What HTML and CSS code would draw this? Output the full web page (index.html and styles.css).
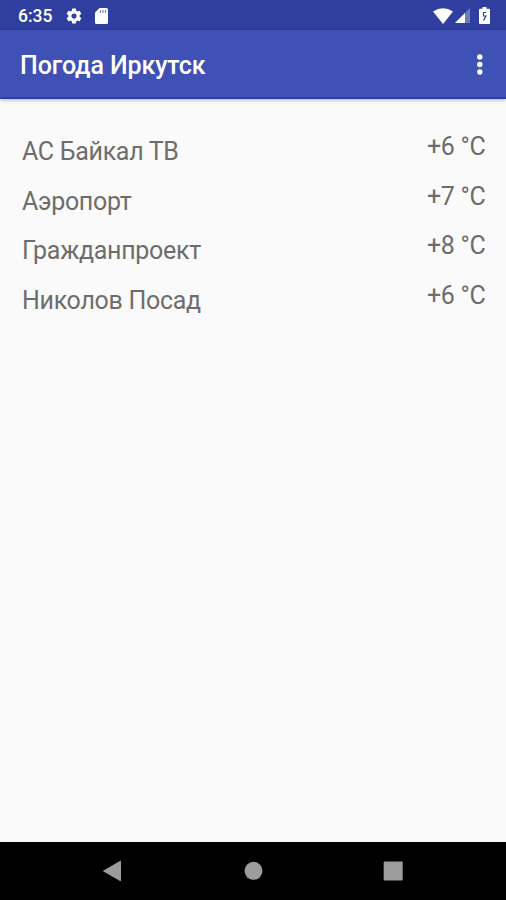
FILE: index.html
```
<!DOCTYPE html>
<html lang="ru">

<head>
    <meta charset="UTF-8" />
    <title>Погода Иркутск</title>
    <link rel="stylesheet" href="styles.css">
</head>

<body>
    <div class="statusBar">
        <span class="time">6:35</span>
        <svg class="gear" width="18" height="18" viewBox="0 0 24 24">
            <path fill="#fff" d="M19.43 12.98c.04-.32.07-.64.07-.98s-.03-.66-.07-.98l2.11-1.65c.19-.15.24-.42.12-.64l-2-3.46c-.12-.22-.39-.3-.61-.22l-2.49 1c-.52-.4-1.08-.73-1.69-.98l-.38-2.65C14.46 2.18 14.25 2 14 2h-4c-.25 0-.46.18-.49.42l-.38 2.65c-.61.25-1.17.59-1.69.98l-2.49-1c-.23-.09-.49 0-.61.22l-2 3.46c-.13.22-.07.49.12.64l2.11 1.65c-.04.32-.07.65-.07.98s.03.66.07.98l-2.11 1.65c-.19.15-.24.42-.12.64l2 3.46c.12.22.39.3.61.22l2.49-1c.52.4 1.08.73 1.69.98l.38 2.65c.03.24.24.42.49.42h4c.25 0 .46-.18.49-.42l.38-2.65c.61-.25 1.17-.59 1.69-.98l2.49 1c.23.09.49 0 .61-.22l2-3.46c.12-.22.07-.49-.12-.64l-2.11-1.65zM12 15.500c-1.930 0-3.500-1.570-3.500-3.500s1.570-3.500 3.500-3.500 3.500 1.570 3.500 3.500-1.570 3.500-3.500 3.500z" />
        </svg>
        <svg class="card" width="13" height="16" viewBox="0 0 13 16">
            <path fill="#fff" d="M4.500 0H11.500Q13 0 13 1.500V14.500Q13 16 11.500 16H1.500Q0 16 0 14.500V4.500z" />
            <path stroke="#303f9f" stroke-opacity=".65" stroke-width="1.200" d="M5.500 2v3M8 2v3M10.500 2v3" />
        </svg>
        <svg class="wifi" width="20" height="16" viewBox="0 0 20 16">
            <path fill="#fff" d="M0 3.500Q10-3 20 3.500L10 16z" />
        </svg>
        <svg class="signal" width="15" height="15" viewBox="0 0 15 15">
            <path fill="#fff" fill-opacity=".3" d="M15 0v15H0z" />
            <path fill="#fff" d="M10 5v10H0z" />
        </svg>
        <svg class="battery" width="11" height="17" viewBox="0 0 11 17">
            <path fill="#fff" d="M3.500 0h4v1.700H10q1 0 1 1V16q0 1-1 1H1q-1 0-1-1V2.700q0-1 1-1h2.500z" />
            <path fill="none" stroke="#303f9f" stroke-width="1.200" d="M7 5.500H4.500V9H7L4.500 13.500" />
        </svg>
    </div>

    <div class="toolbar">
        <div class="title">Погода Иркутск</div>
        <svg class="more" width="6" height="21" viewBox="0 0 6 21">
            <circle cx="2.800" cy="3" r="2.700" fill="#fff" />
            <circle cx="2.800" cy="10.500" r="2.700" fill="#fff" />
            <circle cx="2.800" cy="18" r="2.700" fill="#fff" />
        </svg>
    </div>

    <div class="list">
        <div class="row">
            <div class="name">АС Байкал ТВ</div>
            <div class="temp">+6 °C</div>
        </div>
        <div class="row">
            <div class="name">Аэропорт</div>
            <div class="temp">+7 °C</div>
        </div>
        <div class="row">
            <div class="name">Гражданпроект</div>
            <div class="temp">+8 °C</div>
        </div>
        <div class="row">
            <div class="name">Николов Посад</div>
            <div class="temp">+6 °C</div>
        </div>
    </div>

    <div class="navBar">
        <svg width="20" height="22" viewBox="0 0 20 22">
            <path fill="#9c9c9c" stroke="#9c9c9c" stroke-linejoin="round" d="M.500 11L17.500 1.200v19.600z" />
        </svg>
        <svg width="20" height="22" viewBox="0 0 20 22">
            <circle cx="10.500" cy="10.800" r="9" fill="#9c9c9c" />
        </svg>
        <svg width="20" height="22" viewBox="0 0 20 22">
            <rect x=".700" y="1.500" width="19" height="19" rx="1" fill="#9c9c9c" />
        </svg>
    </div>
</body>

</html>
```
FILE: styles.css
```
* {
    box-sizing: border-box;
}

body {
    margin: 0;
    height: 900px;
    display: flex;
    flex-direction: column;
    background-color: #fafafa;
    font-family: Roboto, "Liberation Sans", sans-serif;
    overflow: hidden;
}

svg {
    display: block;
    flex: none;
}

.statusBar {
    height: 30px;
    padding: 1px 16px 0 18px;
    display: flex;
    align-items: center;
    background-color: #303f9f;
    color: white;
}

.time {
    width: 47px;
    font-size: 17.5px;
    font-weight: 500;
    line-height: 30px;
}

.card {
    margin-left: 12px;
}

.wifi {
    margin-left: auto;
}

.signal {
    margin-left: 2px;
}

.battery {
    margin-left: 9px;
}

.toolbar {
    height: 69px;
    padding: 2px 23px 0 20px;
    display: flex;
    align-items: center;
    justify-content: space-between;
    background-color: #3f51b5;
    border-bottom: 2px solid #2c40a8;
    box-shadow: 0 1px 4px rgba(0, 0, 0, 0.3);
    color: white;
}

.title {
    font-size: 25px;
    font-weight: 500;
    line-height: 30px;
    letter-spacing: -0.1px;
    padding-top: 2px;
}

.list {
    flex: 1;
    padding: 33px 20.5px 0 22px;
}

.row {
    height: 49.7px;
    display: flex;
    justify-content: space-between;
    font-size: 25px;
    line-height: 30px;
    letter-spacing: -0.3px;
    color: #6d6d6d;
}

.name {
    padding-top: 5px;
}

.navBar {
    height: 58px;
    display: flex;
    align-items: center;
    justify-content: center;
    gap: 120px;
    background-color: black;
}
```
